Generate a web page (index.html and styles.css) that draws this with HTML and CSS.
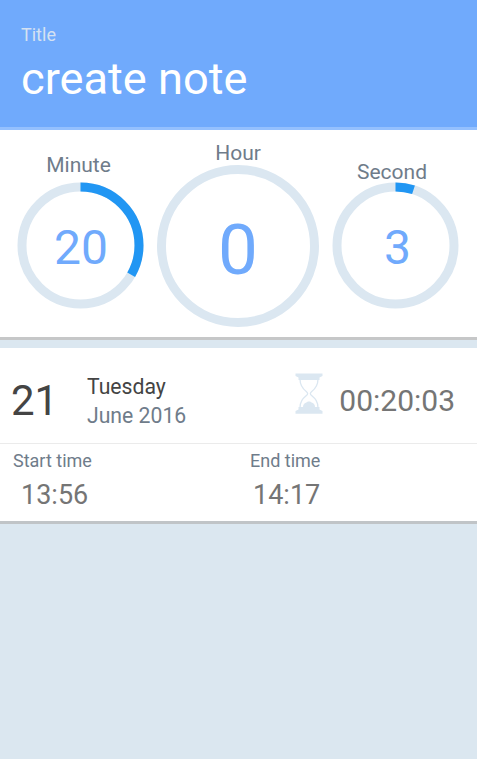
FILE: index.html
```html
<!DOCTYPE html>
<html lang="en">
<head>
    <meta charset="UTF-8">
    <meta name="viewport" content="width=device-width, initial-scale=1.0">
    <title>Create note</title>
    <link rel="stylesheet" href="styles.css">
</head>
<body>
    <header class="header">
        <div class="header-label">Title</div>
        <h1>create note</h1>
    </header>

    <section class="timer">
        <div class="dial minute">
            <div class="dial-label">Minute</div>
            <svg width="127" height="127" viewBox="0 0 127 127">
                <circle class="track" cx="63.5" cy="63.5" r="58.5"/>
                <circle class="value" cx="63.5" cy="63.5" r="58.5" pathLength="60" stroke-dasharray="20 40" transform="rotate(-90 63.5 63.5)"/>
                <text x="64" y="82">20</text>
            </svg>
        </div>
        <div class="dial hour">
            <div class="dial-label">Hour</div>
            <svg width="162" height="162" viewBox="0 0 162 162">
                <circle class="track" cx="81" cy="81" r="76.5"/>
                <text x="81" y="109">0</text>
            </svg>
        </div>
        <div class="dial second">
            <div class="dial-label">Second</div>
            <svg width="127" height="127" viewBox="0 0 127 127">
                <circle class="track" cx="63.5" cy="63.5" r="58.5"/>
                <circle class="value" cx="63.5" cy="63.5" r="58.5" pathLength="60" stroke-dasharray="3 57" transform="rotate(-90 63.5 63.5)"/>
                <text x="65.5" y="82">3</text>
            </svg>
        </div>
    </section>

    <section class="card">
        <div class="date-row">
            <div class="day">21</div>
            <div class="date">
                <div class="weekday">Tuesday</div>
                <div class="month">June 2016</div>
            </div>
            <svg class="hourglass" width="28" height="41" viewBox="0 0 28 41">
                <path class="cap" d="M0.5 0.5h27v2.5l-3 1.5v2.5h-21v-2.5l-3-1.5z"/>
                <path class="cap" d="M0.5 40.7v-2.7l3-1.5v-2.5h4.500c0-2.500 1.500-4 3.500-4.500c1-1.300 4-1.300 5 0c2 .5 3.500 2 3.500 4.500h4.500v2.500l3 1.500v2.700z"/>
                <path class="glass" d="M5 6c0 7 3 10 6.500 12.800c1.500 1.200 1.500 2.400 0 3.700C8 25.500 5 28 5 35M23 6c0 7-3 10-6.500 12.800c-1.500 1.200-1.500 2.400 0 3.700C20 25.500 23 28 23 35"/>
            </svg>
            <div class="total">00:20:03</div>
        </div>
        <div class="time-row">
            <div class="time start">
                <div class="time-label">Start time</div>
                <div class="time-value">13:56</div>
            </div>
            <div class="time end">
                <div class="time-label">End time</div>
                <div class="time-value">14:17</div>
            </div>
        </div>
    </section>
</body>
</html>
```
FILE: styles.css
```css
* {
    box-sizing: border-box;
}
body {
    margin: 0;
    font-family: Roboto, sans-serif;
    background-color: #dbe7f0;
    color: #6f7c8a;
}
.header {
    height: 130px;
    padding: 25px 21px 0;
    background-color: #70aafc;
    border-bottom: 3px solid #94c0fe;
}
.header-label {
    font-size: 18px;
    line-height: 20px;
    color: #d4e1f2;
}
h1 {
    margin: 7px 0 0;
    font-size: 45.2px;
    font-weight: 400;
    line-height: 54px;
    color: #fff;
}

/* timer dials */
.timer {
    display: flex;
    gap: 13px;
    height: 210px;
    padding: 11px 17px 0;
    background-color: #fff;
    border-bottom: 3px solid #c6c7c8;
}
.dial-label {
    font-size: 21px;
    line-height: 24px;
    text-align: center;
}
.dial svg {
    display: block;
}
.minute {
    padding-top: 12px;
}
.minute .dial-label {
    margin-bottom: 5px;
    padding-right: 4px;
}
.second {
    padding-top: 19px;
}
.second .dial-label {
    margin-bottom: -2px;
    padding-right: 7px;
}
.track,
.value {
    fill: none;
    stroke: #dbe7f1;
    stroke-width: 9;
}
.value {
    stroke: #2196f3;
}
.dial text {
    fill: #70aafc;
    font-size: 48px;
    text-anchor: middle;
}
.hour text {
    font-size: 71px;
}

/* date and times */
.card {
    height: 176px;
    margin-top: 8px;
    background-color: #fff;
    border-bottom: 3px solid #c0c4c7;
}
.date-row {
    display: flex;
    height: 96px;
    padding: 24px 22px 0 11px;
    border-bottom: 1px solid #ebebeb;
}
.day {
    width: 76px;
    margin-top: 4px;
    font-size: 42px;
    line-height: 50px;
    color: #444;
}
.date {
    font-size: 21.2px;
    line-height: 29px;
}
.weekday {
    color: #444;
}
.hourglass {
    margin: 1px 16px 0 auto;
}
.cap {
    fill: #dbe7f1;
}
.glass {
    fill: none;
    stroke: #dbe7f1;
    stroke-width: 1.3;
}
.total {
    margin-top: 11px;
    font-size: 30px;
    line-height: 36px;
    color: #757575;
}
.time-row {
    display: grid;
    grid-template-columns: 237px 1fr;
    padding: 7px 13px 0;
}
.time-label {
    font-size: 18px;
    line-height: 20px;
}
.time-value {
    margin-top: 8px;
    padding-left: 8px;
    font-size: 27px;
    line-height: 32px;
    color: #757575;
}
.end .time-value {
    padding-left: 3px;
}
```
